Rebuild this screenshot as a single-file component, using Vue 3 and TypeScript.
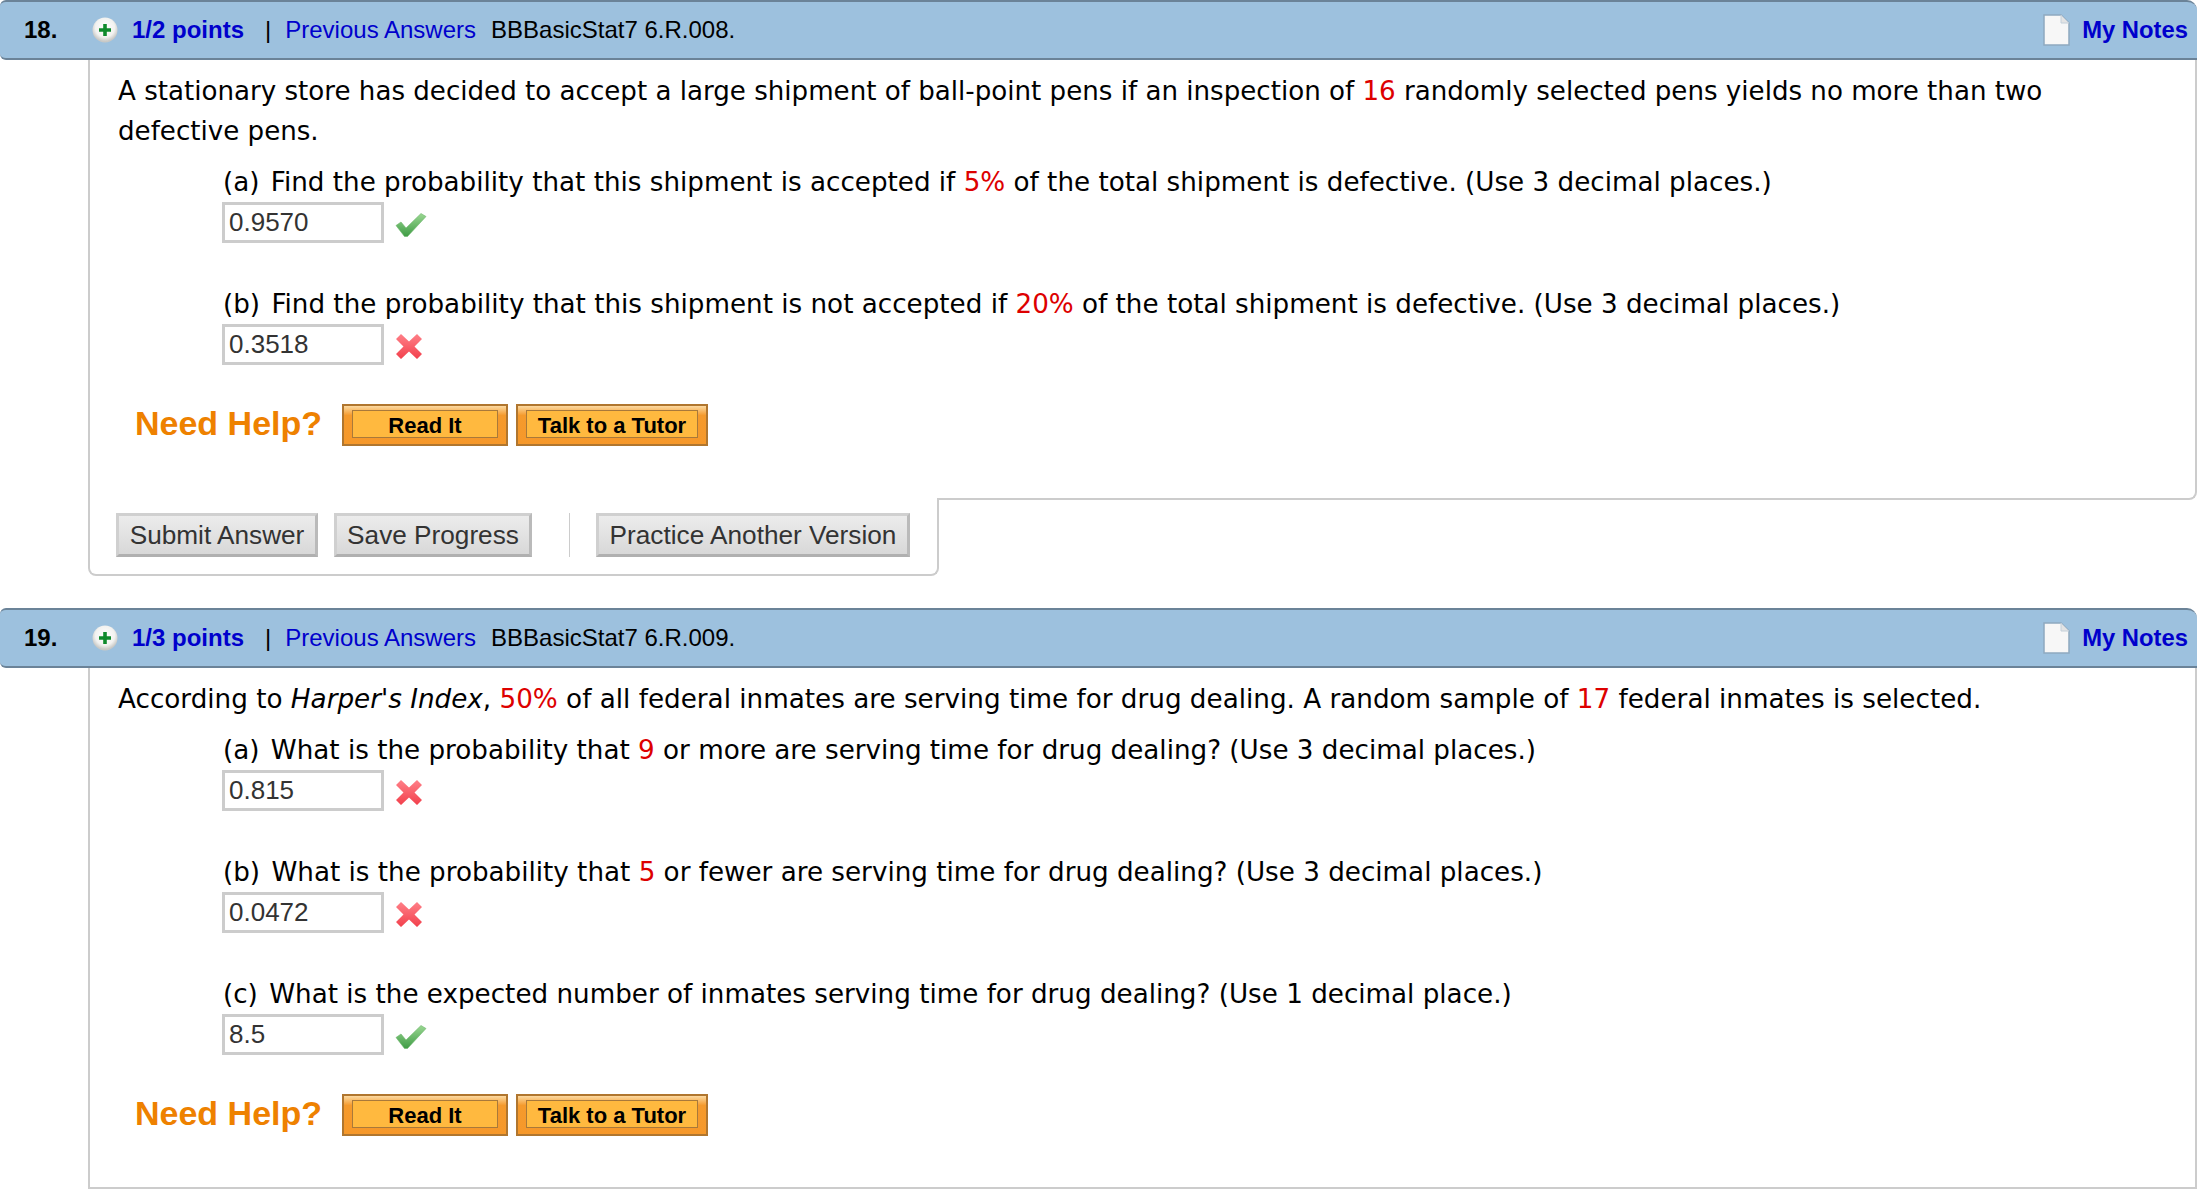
<template>
  <div class="page">
    <section v-for="q in questions" :key="q.num" class="question">
      <header class="head">
        <span class="num">{{ q.num }}.</span>
        <svg class="plus" viewBox="0 0 26 26" width="26" height="26">
          <defs>
            <radialGradient :id="`disc${q.num}`" cx="50%" cy="40%" r="55%">
              <stop offset="0" stop-color="#ffffff" />
              <stop offset="0.7" stop-color="#f2f2f0" />
              <stop offset="1" stop-color="#c9c9c6" />
            </radialGradient>
          </defs>
          <circle cx="13" cy="13" r="12.5" :fill="`url(#disc${q.num})`" />
          <path d="M11.2 7h3.6v4.200h4.200v3.600h-4.200v4.200h-3.600v-4.200H7v-3.600h4.200z" fill="#0f8a2c" />
        </svg>
        <span class="points">{{ q.points }}</span>
        <span class="sep">|</span>
        <span class="prev">Previous Answers</span>
        <span class="ref">{{ q.code }}</span>
        <span class="notes">
          <svg class="note" viewBox="0 0 27 32" width="27" height="32">
            <path d="M1 1h17l8 8v22H1z" fill="#f7f7f7" stroke="#8fa9c0" stroke-width="1.5" />
            <path d="M18 1v8h8" fill="#e4e4e4" stroke="#c4d0da" stroke-width="1" />
          </svg>
          My Notes
        </span>
      </header>

      <div class="panel" :class="{ last: !q.actions }">
        <p class="intro">
          <template v-for="(s, i) in q.intro" :key="i">
            <span :class="s.kind">{{ s.text }}</span>
          </template>
        </p>

        <div v-for="part in q.parts" :key="part.answer" class="part">
          <div class="label">
            <template v-for="(s, i) in part.label" :key="i">
              <span :class="s.kind">{{ s.text }}</span>
            </template>
          </div>
          <div class="answer">
            <input class="field" type="text" readonly :value="part.answer" />
            <svg v-if="part.ok" class="mark" viewBox="0 0 32 26" width="32" height="26">
              <defs>
                <linearGradient :id="`ok${part.answer}`" x1="0" y1="0" x2="0" y2="1">
                  <stop offset="0" stop-color="#9ad792" />
                  <stop offset="1" stop-color="#3f9c45" />
                </linearGradient>
              </defs>
              <path d="M1 13.500l5-3.500 5 6L26 1.500l5 3L12.500 24.500h-3z" :fill="`url(#ok${part.answer})`" stroke="#6db56c" stroke-width="0.6" />
            </svg>
            <svg v-else class="mark" viewBox="0 0 28 27" width="28" height="27">
              <defs>
                <linearGradient :id="`bad${part.answer}`" x1="0" y1="0" x2="0" y2="1">
                  <stop offset="0" stop-color="#ff8088" />
                  <stop offset="1" stop-color="#f2404c" />
                </linearGradient>
              </defs>
              <path d="M6 1l8 7.500L22 1l5 5-7.500 7.500L27 21l-5 5-8-7.500L6 26l-5-5 7.500-7.500L1 6z" :fill="`url(#bad${part.answer})`" />
            </svg>
          </div>
        </div>

        <div class="help">
          <span class="need">Need Help?</span>
          <button class="orange read"><span>Read It</span></button>
          <button class="orange tutor"><span>Talk to a Tutor</span></button>
        </div>
      </div>

      <div v-if="q.actions" class="actions">
        <button class="grey submit">Submit Answer</button>
        <button class="grey save">Save Progress</button>
        <span class="divider"></span>
        <button class="grey practice">Practice Another Version</button>
      </div>
    </section>
  </div>
</template>

<script setup lang="ts">
interface Seg {
  text: string
  kind?: 'red' | 'em' | 'tag'
}

interface Part {
  label: Seg[]
  answer: string
  ok: boolean
}

interface Question {
  num: number
  points: string
  code: string
  intro: Seg[]
  parts: Part[]
  actions: boolean
}

const questions: Question[] = [
  {
    num: 18,
    points: '1/2 points',
    code: 'BBBasicStat7 6.R.008.',
    actions: true,
    intro: [
      { text: 'A stationary store has decided to accept a large shipment of ball-point pens if an inspection of ' },
      { text: '16', kind: 'red' },
      { text: ' randomly selected pens yields no more than two defective pens.' }
    ],
    parts: [
      {
        label: [
          { text: '(a)', kind: 'tag' },
          { text: ' Find the probability that this shipment is accepted if ' },
          { text: '5%', kind: 'red' },
          { text: ' of the total shipment is defective. (Use 3 decimal places.)' }
        ],
        answer: '0.9570',
        ok: true
      },
      {
        label: [
          { text: '(b)', kind: 'tag' },
          { text: ' Find the probability that this shipment is not accepted if ' },
          { text: '20%', kind: 'red' },
          { text: ' of the total shipment is defective. (Use 3 decimal places.)' }
        ],
        answer: '0.3518',
        ok: false
      }
    ]
  },
  {
    num: 19,
    points: '1/3 points',
    code: 'BBBasicStat7 6.R.009.',
    actions: false,
    intro: [
      { text: 'According to ' },
      { text: "Harper's Index", kind: 'em' },
      { text: ', ' },
      { text: '50%', kind: 'red' },
      { text: ' of all federal inmates are serving time for drug dealing. A random sample of ' },
      { text: '17', kind: 'red' },
      { text: ' federal inmates is selected.' }
    ],
    parts: [
      {
        label: [
          { text: '(a)', kind: 'tag' },
          { text: ' What is the probability that ' },
          { text: '9', kind: 'red' },
          { text: ' or more are serving time for drug dealing? (Use 3 decimal places.)' }
        ],
        answer: '0.815',
        ok: false
      },
      {
        label: [
          { text: '(b)', kind: 'tag' },
          { text: ' What is the probability that ' },
          { text: '5', kind: 'red' },
          { text: ' or fewer are serving time for drug dealing? (Use 3 decimal places.)' }
        ],
        answer: '0.0472',
        ok: false
      },
      {
        label: [
          { text: '(c)', kind: 'tag' },
          { text: ' What is the expected number of inmates serving time for drug dealing? (Use 1 decimal place.)' }
        ],
        answer: '8.5',
        ok: true
      }
    ]
  }
]
</script>

<style>
html,
body {
  background: #fff;
}
</style>

<style scoped>
.page {
  width: 2202px;
  height: 1194px;
  overflow: hidden;
  font-family: "Liberation Sans", Arial, sans-serif;
  color: #000;
}

.question {
  margin-bottom: 32px;
}

.head {
  display: flex;
  align-items: center;
  box-sizing: border-box;
  width: 2197px;
  height: 60px;
  padding: 0 9px 0 24px;
  background: #9dc1de;
  border-top: 2px solid #6b8398;
  border-bottom: 2px solid #6b8398;
  border-radius: 6px 10px 0 6px;
  font-size: 24px;
}

.num {
  width: 68px;
  font-weight: 700;
}

.plus {
  margin-right: 14px;
}

.points {
  font-weight: 700;
  color: #0000cc;
}

.sep {
  margin: 0 14px 0 21px;
}

.prev {
  color: #0000cc;
}

.ref {
  margin-left: 15px;
}

.notes {
  display: flex;
  align-items: center;
  gap: 12px;
  margin-left: auto;
  font-size: 23.8px;
  font-weight: 700;
  color: #0000cc;
}

.panel {
  box-sizing: border-box;
  width: 2109px;
  margin-left: 88px;
  padding: 11px 45px 52px 28px;
  border: 2px solid #ccc;
  border-top: none;
  border-radius: 0 0 8px 0;
  font-family: "DejaVu Sans", Verdana, sans-serif;
  font-size: 26.12px;
  line-height: 40px;
}

.panel.last {
  border-radius: 0;
  padding-bottom: 51px;
  font-size: 26.22px;
}

.intro {
  margin: 0 0 11px;
}

.red {
  color: #dd0000;
}

.em {
  font-style: italic;
}

.tag {
  margin-right: 3px;
}

.part {
  margin-left: 105px;
}

.part + .part {
  margin-top: 41px;
}

.label {
  padding-top: 1px;
  font-size: 26.2px;
  line-height: 39px;
}

.answer {
  display: flex;
  align-items: center;
  gap: 11px;
  margin-left: -1px;
}

.field {
  box-sizing: border-box;
  width: 162px;
  height: 41px;
  padding: 0 4px;
  border: 3px solid #ccc;
  border-radius: 0;
  outline: none;
  background: #fff;
  font-family: "Liberation Sans", Arial, sans-serif;
  font-size: 26px;
  color: #333;
}

.mark {
  margin-top: 4px;
}

.help {
  display: flex;
  align-items: center;
  height: 42px;
  margin-top: 39px;
  margin-left: 17px;
}

.need {
  width: 207px;
  margin-top: -5px;
  font-family: "Liberation Sans", Arial, sans-serif;
  font-size: 34px;
  font-weight: 700;
  color: #ee8100;
}

.orange {
  box-sizing: border-box;
  height: 42px;
  padding: 4px 8px 6px;
  border: 2px solid #b0762f;
  background: linear-gradient(#fcd9a0, #f59a2c 25%, #f6982a);
  font-family: "Liberation Sans", Arial, sans-serif;
  font-size: 22px;
  font-weight: 700;
  color: #000;
}

.orange span {
  display: block;
  height: 100%;
  line-height: 29px;
  background: #ffb93f;
  border: 1.500px solid #a9793a;
  box-sizing: border-box;
}

.read {
  width: 166px;
  margin-right: 8px;
}

.tutor {
  width: 192px;
}

.actions {
  position: relative;
  display: flex;
  align-items: center;
  box-sizing: border-box;
  width: 851px;
  height: 78px;
  margin: -2px 0 0 88px;
  padding: 0 0 2px 26px;
  border: 2px solid #ccc;
  border-top: none;
  border-radius: 0 0 8px 8px;
  background: #fff;
}

.grey {
  box-sizing: border-box;
  height: 44px;
  padding: 0;
  border: 3px solid #d0d0d0;
  border-bottom-color: #b0b0b0;
  border-right-color: #bababa;
  background: linear-gradient(#ececec, #d8d8d8);
  font-family: "Liberation Sans", Arial, sans-serif;
  font-size: 26.2px;
  color: #333;
}

.submit {
  width: 202px;
  margin-right: 16px;
}

.save {
  width: 198px;
}

.divider {
  width: 1px;
  height: 44px;
  margin: 0 26px 0 37px;
  background: #ccc;
}

.practice {
  width: 314px;
}
</style>
